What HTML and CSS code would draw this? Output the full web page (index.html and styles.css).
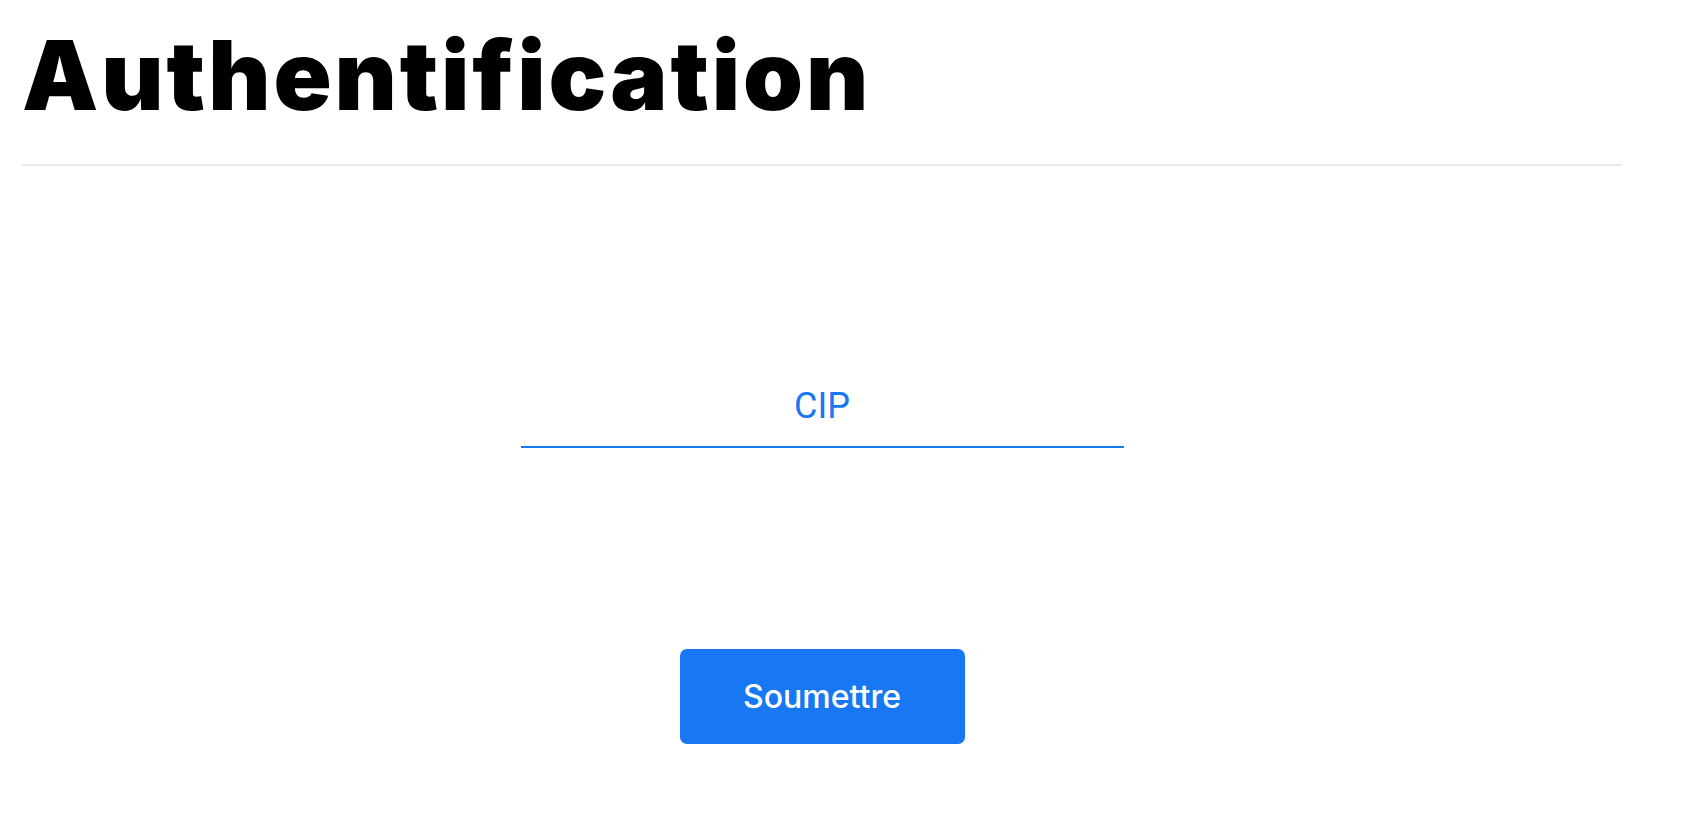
FILE: index.html
```html
<!DOCTYPE html>
<html lang="fr">
<head>
<meta charset="utf-8">
<title>Authentification</title>
<link rel="stylesheet" href="styles.css">
</head>
<body>
<main class="page">
  <h1 class="title">Authentification</h1>
  <hr class="divider">
  <form class="login-form">
    <label class="field">
      <span class="field-label">CIP</span>
    </label>
    <button type="button" class="submit">Soumettre</button>
  </form>
</main>
</body>
</html>
```

FILE: styles.css
```css
* { box-sizing: border-box; }
html, body { margin: 0; padding: 0; background: #ffffff; }
body { font-family: Inter, "Noto Sans", sans-serif; color: #000; }

.page {
  width: 1644px;
  padding: 0 22px;
}

.title {
  margin: 27px 0 0 0;
  font-family: Inter, sans-serif;
  font-weight: 900;
  font-size: 96px;
  line-height: 96px;
  letter-spacing: 2.9px;
}

.divider {
  margin: 41px 0 0 0;
  border: 0;
  height: 2px;
  background: #e9e9ea;
}

.login-form {
  display: flex;
  flex-direction: column;
  align-items: center;
  padding-top: 218px;
  gap: 201px;
}

.field {
  display: block;
  width: 603px;
  padding-bottom: 18px;
  border-bottom: 2px solid #1877f2;
  text-align: center;
}

.field-label {
  font-family: Roboto, sans-serif;
  font-size: 36px;
  line-height: 44px;
  color: #1877f2;
}

.submit {
  width: 285px;
  height: 95px;
  border: 0;
  border-radius: 7px;
  background: #1877f2;
  color: #ffffff;
  font-family: Inter, sans-serif;
  font-weight: 500;
  font-size: 32px;
  line-height: 40px;
  cursor: pointer;
}
```
